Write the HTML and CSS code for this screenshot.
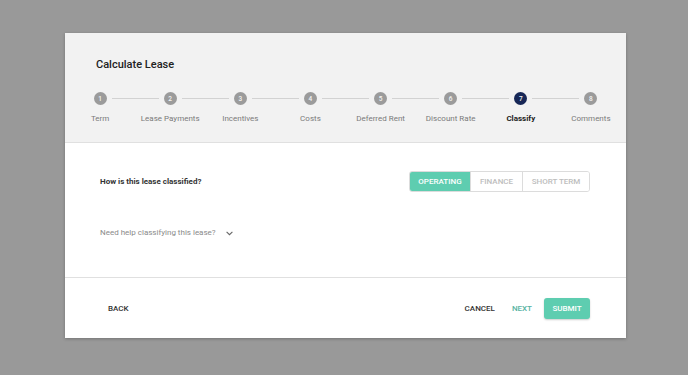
FILE: index.html
```html
<!DOCTYPE html>
<html lang="en">
<head>
<meta charset="utf-8">
<title>Calculate Lease</title>
<link rel="stylesheet" href="styles.css">
</head>
<body>
  <div class="dialog">
    <div class="header">
      <h1 class="title">Calculate Lease</h1>
      <ol class="stepper">
        <li class="step"><span class="dot">1</span><span class="label">Term</span></li>
        <li class="step"><span class="dot">2</span><span class="label">Lease Payments</span></li>
        <li class="step"><span class="dot">3</span><span class="label">Incentives</span></li>
        <li class="step"><span class="dot">4</span><span class="label">Costs</span></li>
        <li class="step"><span class="dot">5</span><span class="label">Deferred Rent</span></li>
        <li class="step"><span class="dot">6</span><span class="label">Discount Rate</span></li>
        <li class="step active"><span class="dot">7</span><span class="label">Classify</span></li>
        <li class="step"><span class="dot">8</span><span class="label">Comments</span></li>
      </ol>
    </div>
    <div class="body">
      <div class="question-row">
        <span class="question">How is this lease classified?</span>
        <div class="toggle">
          <button class="opt opt-operating selected">Operating</button>
          <button class="opt opt-finance">Finance</button>
          <button class="opt opt-short">Short Term</button>
        </div>
      </div>
      <div class="help">
        <span>Need help classifying this lease?</span>
        <svg class="chev" width="7" height="5" viewBox="0 0 7 5"><path d="M0.6 0.8 L3.5 3.7 L6.4 0.8" fill="none" stroke="#666" stroke-width="1.1"/></svg>
      </div>
    </div>
    <div class="footer">
      <button class="text-btn back">Back</button>
      <div class="actions">
        <button class="text-btn cancel">Cancel</button>
        <button class="text-btn next">Next</button>
        <button class="submit">Submit</button>
      </div>
    </div>
  </div>
</body>
</html>
```

FILE: styles.css
```css
* { box-sizing: border-box; }

html, body {
  margin: 0;
  height: 375px;
}

body {
  background: #999999;
  font-family: Roboto, "Liberation Sans", Arial, sans-serif;
  padding: 33px 0 0 65px;
}

.dialog {
  width: 561px;
  background: #ffffff;
  box-shadow: 0 1px 3px rgba(0, 0, 0, 0.25);
}

.header {
  background: #f2f2f2;
  height: 110px;
  border-bottom: 1px solid #e0e0e0;
  padding: 25px 0 0 0;
}

.title {
  margin: 0 0 20px 31px;
  font-size: 11px;
  line-height: 14px;
  font-weight: 500;
  color: #222;
}

.stepper {
  list-style: none;
  margin: 0;
  padding: 0;
  display: flex;
}

.step {
  flex: 1;
  display: flex;
  flex-direction: column;
  align-items: center;
  position: relative;
}

.step:not(:first-child)::before {
  content: "";
  position: absolute;
  top: 6px;
  right: calc(50% + 11.5px);
  width: 47px;
  height: 1px;
  background: #d2d2d2;
}

.dot {
  width: 13px;
  height: 13px;
  border-radius: 50%;
  background: #9b9b9b;
  color: #f4f4f4;
  font-size: 6.5px;
  font-weight: 500;
  display: flex;
  align-items: center;
  justify-content: center;
}

.label {
  margin-top: 9px;
  font-size: 8px;
  line-height: 10px;
  color: #7a7a7a;
  white-space: nowrap;
}

.step.active .dot {
  background: #172756;
}

.step.active .label {
  color: #222;
  font-weight: 700;
}

.body {
  height: 135px;
  border-bottom: 1px solid #e0e0e0;
  padding: 28px 36px 0 35px;
}

.question-row {
  display: flex;
  justify-content: space-between;
  align-items: center;
  height: 21px;
}

.question {
  font-size: 8px;
  font-weight: 700;
  color: #333;
}

.toggle {
  display: flex;
  border: 1px solid #dcdcdc;
  border-radius: 3px;
  overflow: hidden;
  height: 21px;
}

.opt {
  border: 0;
  margin: 0;
  padding: 0;
  background: #fff;
  font-family: inherit;
  font-size: 8px;
  font-weight: 500;
  text-transform: uppercase;
  color: #bdbdbd;
  display: flex;
  align-items: center;
  justify-content: center;
}

.opt + .opt {
  border-left: 1px solid #dcdcdc;
}

.opt-operating { width: 60px; }
.opt-finance { width: 52px; }
.opt-short { width: 67px; }

.opt.selected {
  background: #5ecdb0;
  color: #fff;
}

.help {
  margin-top: 35px;
  display: flex;
  align-items: center;
  gap: 10px;
  font-size: 8px;
  line-height: 12px;
  color: #8a8a8a;
}

.chev {
  display: block;
}

.footer {
  height: 60px;
  padding: 0 36px 0 35px;
  display: flex;
  align-items: center;
  justify-content: space-between;
}

.actions {
  display: flex;
  align-items: center;
}

.text-btn {
  border: 0;
  background: none;
  padding: 0 8px;
  height: 21px;
  font-family: inherit;
  font-size: 8px;
  font-weight: 500;
  text-transform: uppercase;
  color: #333;
}

.next {
  margin-left: 1px;
  color: #58b3a2;
}

.submit {
  margin-left: 4px;
  border: 0;
  height: 21px;
  width: 46px;
  padding: 0;
  border-radius: 3px;
  background: #5ecdb0;
  color: #fff;
  font-family: inherit;
  font-size: 8px;
  font-weight: 500;
  text-transform: uppercase;
  box-shadow: 0 1px 2px rgba(0, 0, 0, 0.2);
}
```
